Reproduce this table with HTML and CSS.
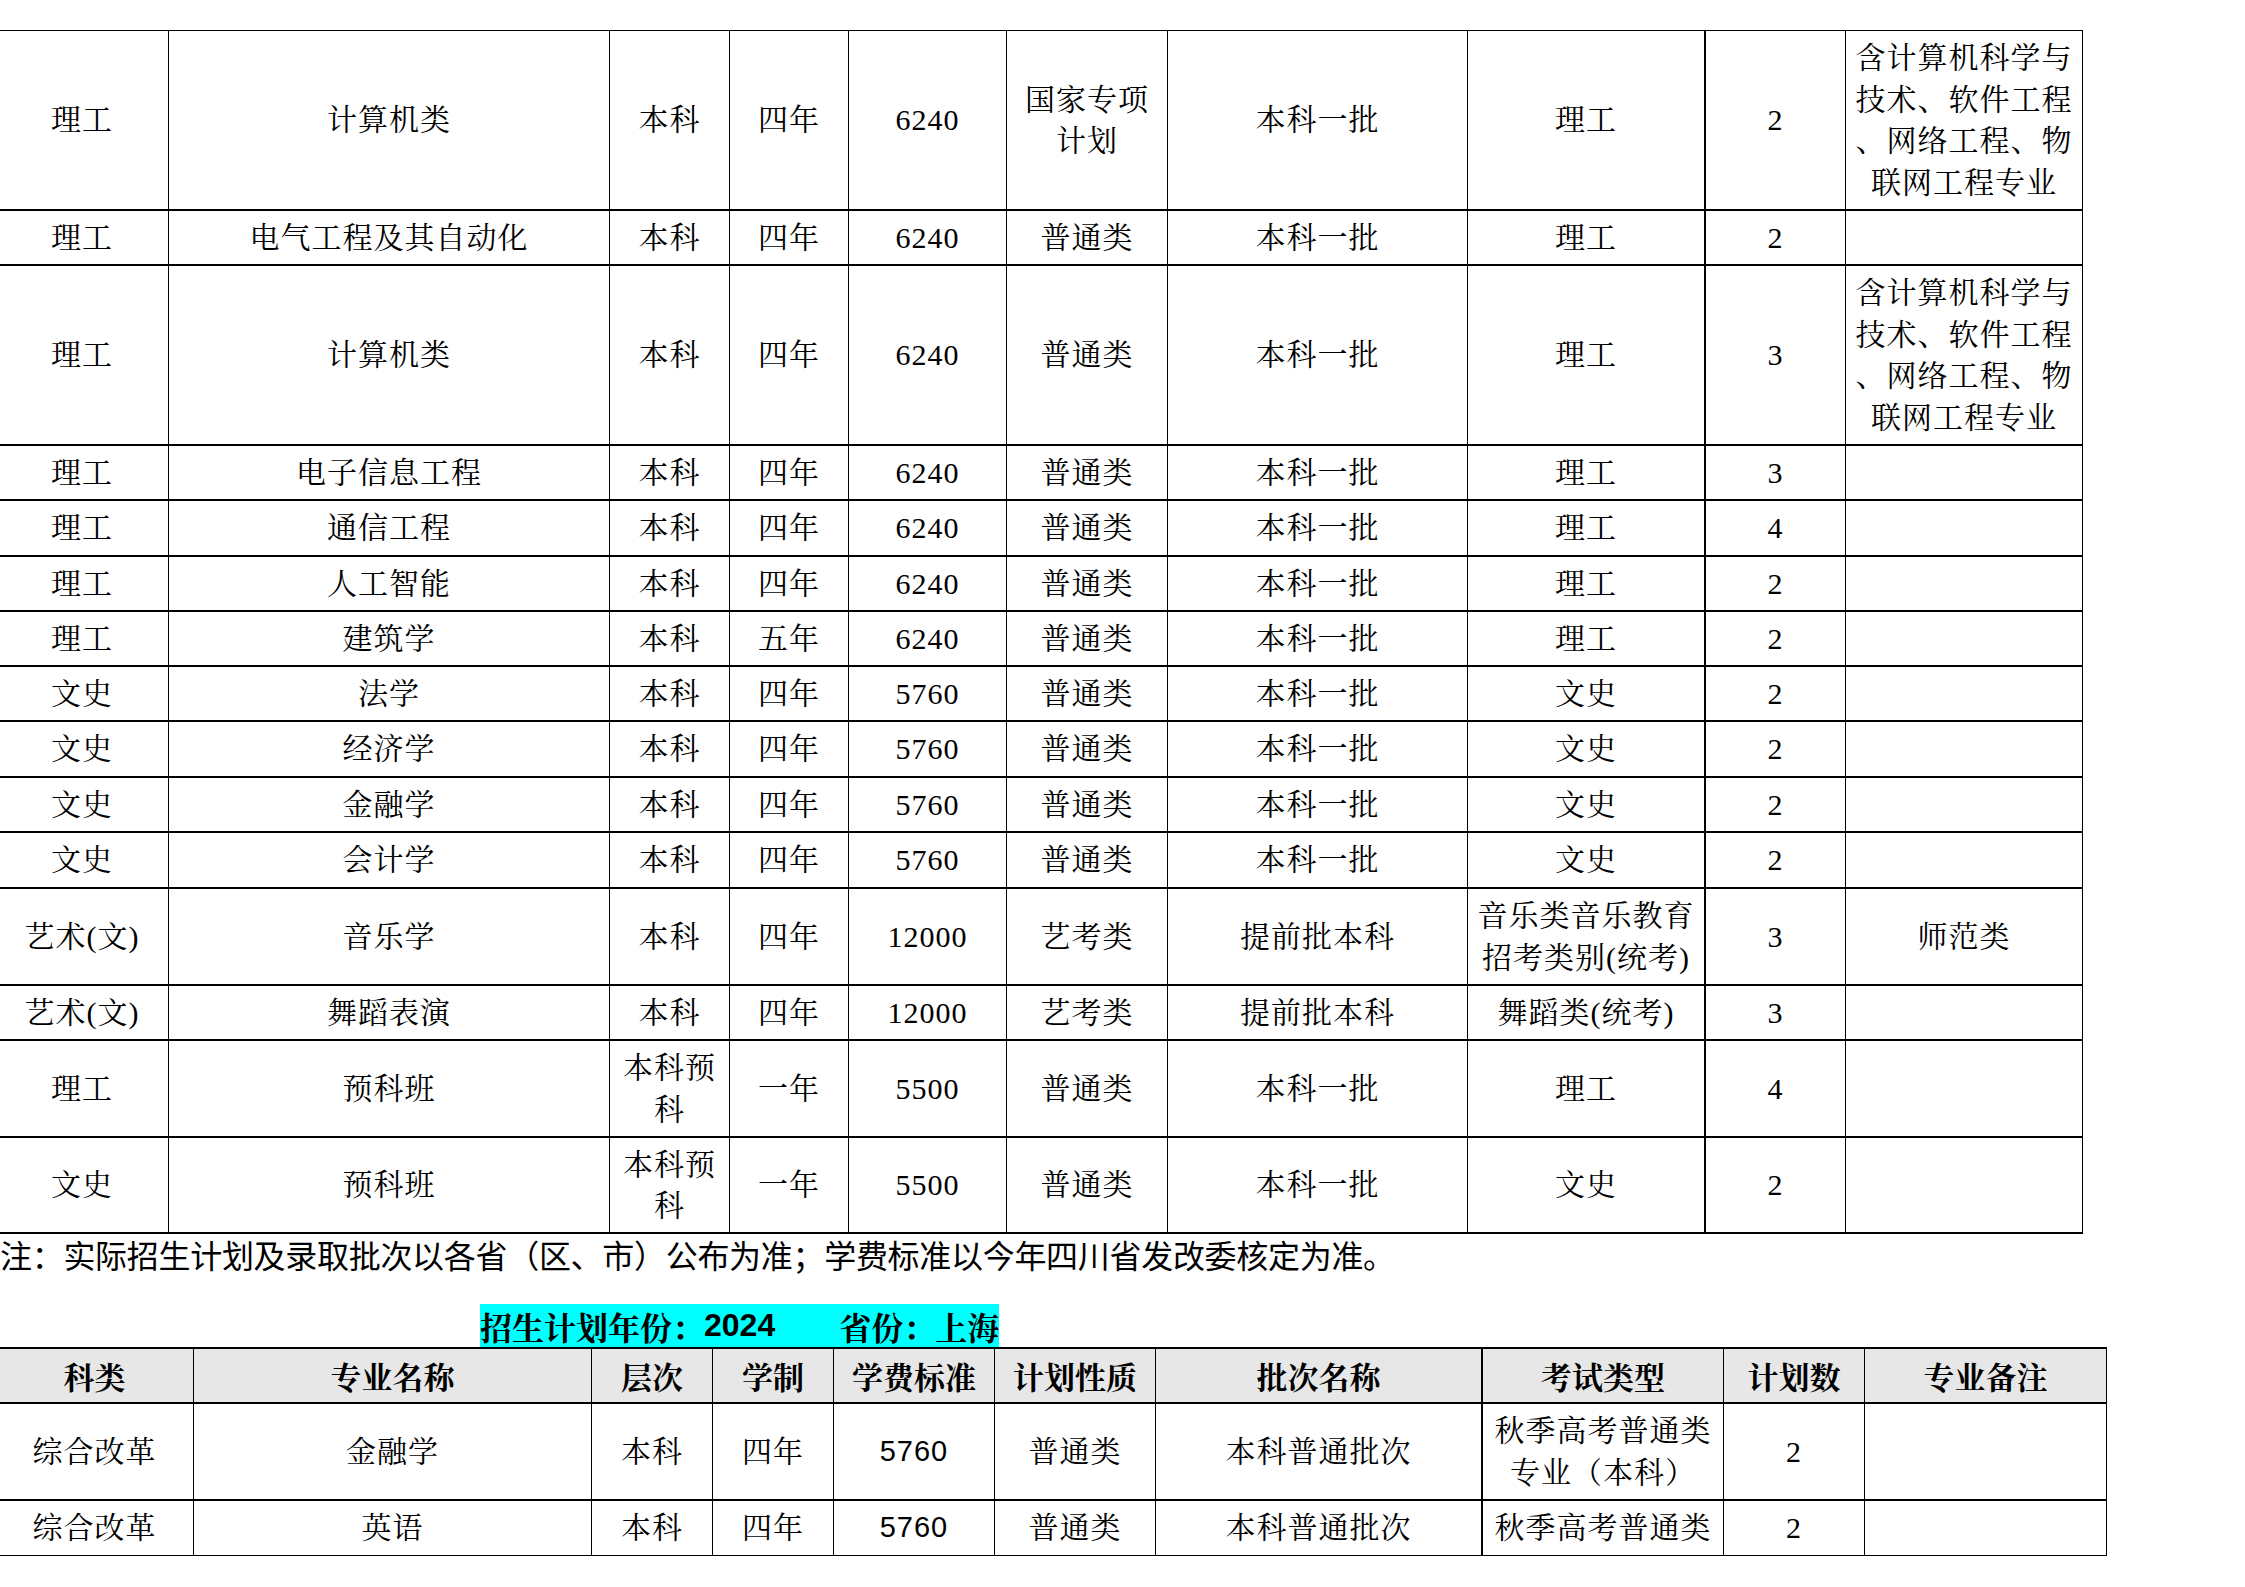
FILE: index.html
```html
<!DOCTYPE html>
<html lang="zh-CN">
<head>
<meta charset="utf-8">
<title>招生计划</title>
<link rel="stylesheet" href="styles.css">
</head>
<body>
<div class="page">
  <table class="plan plan-a">
    <colgroup>
      <col class="a1"><col class="a2"><col class="a3"><col class="a4"><col class="a5">
      <col class="a6"><col class="a7"><col class="a8"><col class="a9"><col class="a10">
    </colgroup>
    <tbody>
      <tr class="h180"><td>理工</td><td>计算机类</td><td>本科</td><td>四年</td><td>6240</td><td>国家专项<br>计划</td><td>本科一批</td><td class="thick">理工</td><td>2</td><td class="nw">含计算机科学与<br>技术、软件工程<br>、网络工程、物<br>联网工程专业</td></tr>
      <tr class="h55"><td>理工</td><td>电气工程及其自动化</td><td>本科</td><td>四年</td><td>6240</td><td>普通类</td><td>本科一批</td><td class="thick">理工</td><td>2</td><td></td></tr>
      <tr class="h180"><td>理工</td><td>计算机类</td><td>本科</td><td>四年</td><td>6240</td><td>普通类</td><td>本科一批</td><td class="thick">理工</td><td>3</td><td class="nw">含计算机科学与<br>技术、软件工程<br>、网络工程、物<br>联网工程专业</td></tr>
      <tr class="h55"><td>理工</td><td>电子信息工程</td><td>本科</td><td>四年</td><td>6240</td><td>普通类</td><td>本科一批</td><td class="thick">理工</td><td>3</td><td></td></tr>
      <tr class="h56"><td>理工</td><td>通信工程</td><td>本科</td><td>四年</td><td>6240</td><td>普通类</td><td>本科一批</td><td class="thick">理工</td><td>4</td><td></td></tr>
      <tr class="h55"><td>理工</td><td>人工智能</td><td>本科</td><td>四年</td><td>6240</td><td>普通类</td><td>本科一批</td><td class="thick">理工</td><td>2</td><td></td></tr>
      <tr class="h55"><td>理工</td><td>建筑学</td><td>本科</td><td>五年</td><td>6240</td><td>普通类</td><td>本科一批</td><td class="thick">理工</td><td>2</td><td></td></tr>
      <tr class="h55"><td>文史</td><td>法学</td><td>本科</td><td>四年</td><td>5760</td><td>普通类</td><td>本科一批</td><td class="thick">文史</td><td>2</td><td></td></tr>
      <tr class="h56"><td>文史</td><td>经济学</td><td>本科</td><td>四年</td><td>5760</td><td>普通类</td><td>本科一批</td><td class="thick">文史</td><td>2</td><td></td></tr>
      <tr class="h55"><td>文史</td><td>金融学</td><td>本科</td><td>四年</td><td>5760</td><td>普通类</td><td>本科一批</td><td class="thick">文史</td><td>2</td><td></td></tr>
      <tr class="h56"><td>文史</td><td>会计学</td><td>本科</td><td>四年</td><td>5760</td><td>普通类</td><td>本科一批</td><td class="thick">文史</td><td>2</td><td></td></tr>
      <tr class="h97"><td>艺术(文)</td><td>音乐学</td><td>本科</td><td>四年</td><td>12000</td><td>艺考类</td><td>提前批本科</td><td class="thick nw">音乐类音乐教育<br>招考类别(统考)</td><td>3</td><td>师范类</td></tr>
      <tr class="h55"><td>艺术(文)</td><td>舞蹈表演</td><td>本科</td><td>四年</td><td>12000</td><td>艺考类</td><td>提前批本科</td><td class="thick">舞蹈类(统考)</td><td>3</td><td></td></tr>
      <tr class="h97"><td>理工</td><td>预科班</td><td class="nw">本科预<br>科</td><td>一年</td><td>5500</td><td>普通类</td><td>本科一批</td><td class="thick">理工</td><td>4</td><td></td></tr>
      <tr class="h96"><td>文史</td><td>预科班</td><td class="nw">本科预<br>科</td><td>一年</td><td>5500</td><td>普通类</td><td>本科一批</td><td class="thick">文史</td><td>2</td><td></td></tr>
    </tbody>
  </table>

  <p class="note">注：实际招生计划及录取批次以各省（区、市）公布为准；学费标准以今年四川省发改委核定为准。</p>

  <div class="title-row">
    <span class="title-band">招生计划年份：<b class="year">2024</b><span class="prov">省份：上海</span></span>
  </div>

  <table class="plan plan-b">
    <colgroup>
      <col class="b1"><col class="b2"><col class="b3"><col class="b4"><col class="b5">
      <col class="b6"><col class="b7"><col class="b8"><col class="b9"><col class="b10">
    </colgroup>
    <thead>
      <tr class="h55 head"><th>科类</th><th>专业名称</th><th>层次</th><th>学制</th><th>学费标准</th><th>计划性质</th><th class="thick">批次名称</th><th>考试类型</th><th>计划数</th><th>专业备注</th></tr>
    </thead>
    <tbody>
      <tr class="h97"><td>综合改革</td><td>金融学</td><td>本科</td><td>四年</td><td class="fee">5760</td><td>普通类</td><td class="thick">本科普通批次</td><td class="nw">秋季高考普通类<br>专业（本科）</td><td>2</td><td></td></tr>
      <tr class="h55 last"><td>综合改革</td><td>英语</td><td>本科</td><td>四年</td><td class="fee">5760</td><td>普通类</td><td class="thick">本科普通批次</td><td>秋季高考普通类</td><td>2</td><td></td></tr>
    </tbody>
  </table>
</div>
</body>
</html>
```

FILE: styles.css
```css
html, body {
  margin: 0;
  padding: 0;
  background: #ffffff;
  color: #000000;
}

.page {
  margin-left: -5px;
  padding-top: 30px;
  font-family: "Liberation Serif", "Noto Serif CJK SC", "Noto Sans CJK SC", serif;
}

.plan {
  border-collapse: separate;
  border-spacing: 0;
  table-layout: fixed;
}

.plan-a {
  width: 2088px;
  border-top: 1px solid #000;
}

.plan-b {
  width: 2112px;
  border-top: 2px solid #000;
}

.a1 { width: 174px; }
.a2 { width: 441px; }
.a3 { width: 120px; }
.a4 { width: 119px; }
.a5 { width: 158px; }
.a6 { width: 161px; }
.a7 { width: 300px; }
.a8 { width: 238px; }
.a9 { width: 140px; }
.a10 { width: 237px; }

.b1 { width: 199px; }
.b2 { width: 398px; }
.b3 { width: 121px; }
.b4 { width: 121px; }
.b5 { width: 161px; }
.b6 { width: 161px; }
.b7 { width: 327px; }
.b8 { width: 241px; }
.b9 { width: 141px; }
.b10 { width: 242px; }

.plan td,
.plan th {
  padding: 0 2px;
  border-right: 1px solid #000;
  border-bottom: 2px solid #000;
  text-align: center;
  vertical-align: middle;
  font-size: 30px;
  line-height: 41.5px;
  letter-spacing: 1px;
  font-weight: 400;
  overflow: hidden;
}

.plan td:first-child,
.plan th:first-child {
  border-left: 1px solid #000;
}

.plan td.thick,
.plan th.thick {
  border-right-width: 2px;
}

.plan .nw {
  white-space: nowrap;
}

.h55 { height: 55px; }
.h56 { height: 56px; }
.h96 { height: 96px; }
.h97 { height: 97px; }
.h180 { height: 180px; }

.plan-b .head th {
  background: #e7e7e7;
  font-family: "Noto Serif CJK SC", "Noto Sans CJK SC", serif;
  font-weight: 700;
  font-size: 31px;
  letter-spacing: 0;
}

.plan-b .last td {
  border-bottom-width: 1px;
}

.plan-b .fee {
  font-family: "Liberation Sans", sans-serif;
  font-size: 29px;
}

.note {
  margin: 0 0 26px;
  padding-left: 5px;
  height: 44px;
  font-family: "Noto Sans CJK SC", sans-serif;
  font-size: 32px;
  line-height: 40px;
  letter-spacing: -0.3px;
  white-space: nowrap;
}

.title-row {
  display: flex;
  padding-left: 485px;
  height: 43px;
}

.title-band {
  display: flex;
  align-items: center;
  background: #00ffff;
  height: 43px;
  font-family: "Liberation Sans", "Noto Serif CJK SC", "Noto Sans CJK SC", sans-serif;
  font-weight: 700;
  font-size: 32px;
  white-space: nowrap;
}

.year {
  font-weight: 700;
}

.prov {
  margin-left: 64px;
}
```
